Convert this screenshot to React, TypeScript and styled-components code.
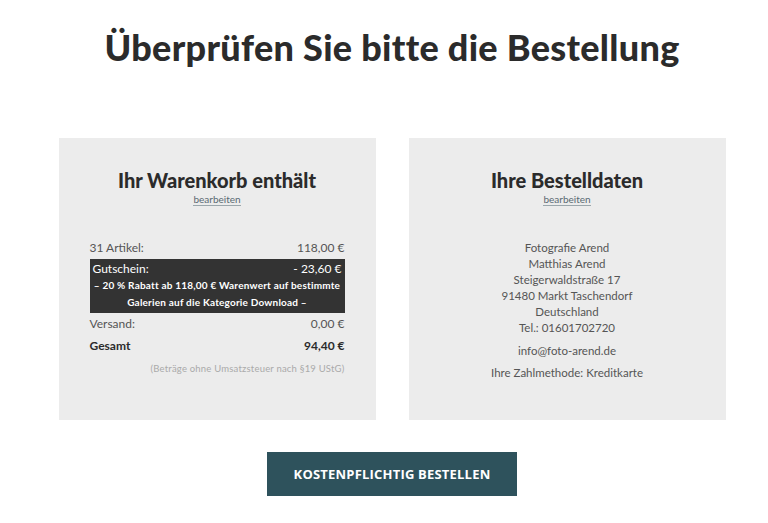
import styled, { createGlobalStyle } from 'styled-components';

const GlobalStyle = createGlobalStyle`
  html, body {
    margin: 0;
    padding: 0;
    background: #fff;
    font-family: Lato, 'Open Sans', sans-serif;
    color: #333;
  }
`;

const Page = styled.main`
  width: 768px;
  height: 523px;
  display: flex;
  flex-direction: column;
  align-items: center;
  box-sizing: border-box;
  padding: 25px 0 0 16px;
`;

const Title = styled.h1`
  margin: 0;
  font-family: Lato, sans-serif;
  font-weight: 900;
  font-size: 36px;
  line-height: 44px;
  letter-spacing: 0.3px;
  color: #2b2b2b;
`;

const Columns = styled.div`
  margin-top: 69px;
  display: grid;
  grid-template-columns: 317px 317px;
  gap: 33px;
`;

const Panel = styled.section`
  background: #ececec;
  height: 282px;
  box-sizing: border-box;
  padding: 30px 31px 0;
  display: flex;
  flex-direction: column;
  align-items: center;
`;

const PanelTitle = styled.h2`
  margin: 0;
  font-family: Lato, sans-serif;
  font-weight: 900;
  font-size: 20px;
  line-height: 24px;
  color: #2b2b2b;
`;

const EditLink = styled.a`
  margin-top: 1px;
  font-size: 10px;
  line-height: 12px;
  color: #5a6a72;
  text-decoration: none;
  border-bottom: 1px solid #9aa6ab;
  cursor: pointer;
`;

const Summary = styled.div`
  margin-top: 31px;
  width: 100%;
  display: flex;
  flex-direction: column;
`;

const Row = styled.div<{ $bold?: boolean }>`
  display: flex;
  justify-content: space-between;
  font-size: 12px;
  line-height: 16px;
  padding: 3px 0;
  color: ${(p) => (p.$bold ? '#2b2b2b' : '#555')};
  font-weight: ${(p) => (p.$bold ? 700 : 400)};
`;

const Voucher = styled.div`
  background: #333;
  color: #fff;
  padding: 2px 3px 2px;
`;

const VoucherRow = styled.div`
  display: flex;
  justify-content: space-between;
  font-size: 12px;
  line-height: 16px;
`;

const VoucherNote = styled.p`
  margin: 0;
  text-align: center;
  white-space: nowrap;
  font-size: 10px;
  font-weight: 700;
  letter-spacing: 0.2px;
  line-height: 17px;
`;

const TaxNote = styled.p`
  margin: 6px 0 0;
  text-align: right;
  font-size: 9.5px;
  letter-spacing: 0.2px;
  color: #aaa;
`;

const Address = styled.div`
  margin-top: 34px;
  text-align: center;
  font-size: 11.5px;
  line-height: 16px;
  color: #555;
`;

const AddressLine = styled.p<{ $gap?: number }>`
  margin: ${(p) => p.$gap ?? 0}px 0 0;
`;

const OrderButton = styled.button`
  margin-top: 32px;
  width: 250px;
  height: 44px;
  border: none;
  background: #2e525c;
  color: #fff;
  font-family: 'Open Sans', sans-serif;
  font-weight: 700;
  font-size: 13px;
  letter-spacing: 0.2px;
  cursor: pointer;
`;

export default function App() {
  return (
    <>
      <GlobalStyle />
      <Page>
        <Title>Überprüfen Sie bitte die Bestellung</Title>
        <Columns>
          <Panel>
            <PanelTitle>Ihr Warenkorb enthält</PanelTitle>
            <EditLink>bearbeiten</EditLink>
            <Summary>
              <Row>
                <span>31 Artikel:</span>
                <span>118,00 €</span>
              </Row>
              <Voucher>
                <VoucherRow>
                  <span>Gutschein:</span>
                  <span>- 23,60 €</span>
                </VoucherRow>
                <VoucherNote>
                  – 20 % Rabatt ab 118,00 € Warenwert auf bestimmte
                  <br />
                  Galerien auf die Kategorie Download –
                </VoucherNote>
              </Voucher>
              <Row>
                <span>Versand:</span>
                <span>0,00 €</span>
              </Row>
              <Row $bold>
                <span>Gesamt</span>
                <span>94,40 €</span>
              </Row>
              <TaxNote>(Beträge ohne Umsatzsteuer nach §19 UStG)</TaxNote>
            </Summary>
          </Panel>
          <Panel>
            <PanelTitle>Ihre Bestelldaten</PanelTitle>
            <EditLink>bearbeiten</EditLink>
            <Address>
              <AddressLine>Fotografie Arend</AddressLine>
              <AddressLine>Matthias Arend</AddressLine>
              <AddressLine>Steigerwaldstraße 17</AddressLine>
              <AddressLine>91480 Markt Taschendorf</AddressLine>
              <AddressLine>Deutschland</AddressLine>
              <AddressLine>Tel.: 01601702720</AddressLine>
              <AddressLine $gap={7}>info@foto-arend.de</AddressLine>
              <AddressLine $gap={6}>Ihre Zahlmethode: Kreditkarte</AddressLine>
            </Address>
          </Panel>
        </Columns>
        <OrderButton>KOSTENPFLICHTIG BESTELLEN</OrderButton>
      </Page>
    </>
  );
}
